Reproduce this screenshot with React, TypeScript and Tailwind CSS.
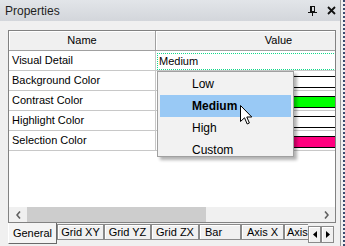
import type { ReactNode } from 'react'

const rows = [
  { name: 'Visual Detail', value: 'Medium' },
  { name: 'Background Color', color: '#ffffff' },
  { name: 'Contrast Color', color: '#00ff00' },
  { name: 'Highlight Color', color: '#ffffff' },
  { name: 'Selection Color', color: '#ff007f' },
]

const tabs = [
  { label: 'Grid XY', w: 'w-[47px]', pad: 'justify-center' },
  { label: 'Grid YZ', w: 'w-[47px]', pad: 'justify-center' },
  { label: 'Grid ZX', w: 'w-[48px]', pad: 'justify-center' },
  { label: 'Bar', w: 'w-[42px]', pad: 'pl-[5px]' },
  { label: 'Axis X', w: 'w-[43px]', pad: 'justify-center' },
  { label: 'Axis', w: 'w-[43px]', pad: 'pl-[2px]' },
]

function PinIcon() {
  return (
    <svg width="9" height="10" viewBox="0 0 9 10" className="block">
      <rect x="2.5" y="0.5" width="4" height="5" fill="none" stroke="#111" />
      <rect x="2" y="0" width="2" height="6" fill="#111" />
      <path d="M0 6.5h9M4.5 6v4" stroke="#111" strokeWidth="1" />
    </svg>
  )
}

function CloseIcon() {
  return (
    <svg width="9" height="9" viewBox="0 0 9 9" className="block">
      <path d="M1 1l7 7M8 1L1 8" stroke="#111" strokeWidth="1.8" />
    </svg>
  )
}

function Chevron({ dir }: { dir: 'l' | 'r' }) {
  return (
    <svg width="5" height="8" viewBox="0 0 5 8" className="block">
      <path
        d={dir === 'l' ? 'M4 0.5L1 4l3 3.5' : 'M1 0.5L4 4l-3 3.5'}
        fill="none"
        stroke="#606060"
        strokeWidth="1.6"
      />
    </svg>
  )
}

function Tri({ dir }: { dir: 'l' | 'r' }) {
  return (
    <svg width="4" height="7" viewBox="0 0 4 7" className="block">
      <path d={dir === 'l' ? 'M4 0v7L0 3.5z' : 'M0 0v7l4-3.5z'} fill="#000" />
    </svg>
  )
}

function HeaderCell({ w, children }: { w: string; children: ReactNode }) {
  return (
    <div
      className={`${w} flex h-[20px] shrink-0 items-center justify-center border-r border-b border-[#a0a0a0] bg-[#f0f0f0] shadow-[inset_1px_1px_0_#ffffff]`}
    >
      {children}
    </div>
  )
}

export default function App() {
  return (
    <div className="flex h-[246px] w-[345px] overflow-hidden bg-[#f0f0f0] font-['Liberation_Sans',Arial,sans-serif] text-[11px] text-black">
      <div className="relative flex h-full w-[341px] shrink-0 flex-col border-r border-[#9c9c9c]">
        {/* title */}
        <div className="flex h-[21px] shrink-0 items-center justify-between bg-gradient-to-b from-[#e2e5e9] to-[#d3d6db] pr-[4px] pl-[5px]">
          <span className="text-[12px] text-[#1e1e1e]">Properties</span>
          <div className="flex items-center gap-[10px]">
            <PinIcon />
            <CloseIcon />
          </div>
        </div>

        {/* grid */}
        <div className="mt-[9px] ml-[8px] flex h-[193px] w-[328px] flex-col border border-[#828282]">
          <div className="h-[176px] w-[326px] overflow-hidden bg-white">
            <div className="w-[393px]">
              <div className="flex">
                <HeaderCell w="w-[147px]">Name</HeaderCell>
                <HeaderCell w="w-[246px]">Value</HeaderCell>
              </div>
              {rows.map((r) => (
                <div key={r.name} className="flex h-[20px] border-b border-[#c8c8c8]">
                  <div className="flex w-[147px] shrink-0 items-center border-r border-[#c8c8c8] pl-[3px]">
                    {r.name}
                  </div>
                  <div className="w-[246px] shrink-0 pl-[1px]">
                    {r.value ? (
                      <div className="mt-[2px] flex h-[17px] items-center border-y border-l border-dotted border-[#14d88a] pl-[1px]">
                        {r.value}
                      </div>
                    ) : (
                      <div
                        className="mt-[5px] ml-[2px] h-[12px] w-[240px] border border-black"
                        style={{ backgroundColor: r.color }}
                      />
                    )}
                  </div>
                </div>
              ))}
            </div>
          </div>
          {/* horizontal scrollbar */}
          <div className="flex h-[15px] items-center bg-[#f0f0f0]">
            <div className="flex w-[18px] justify-center">
              <Chevron dir="l" />
            </div>
            <div className="h-[15px] w-[179px] bg-[#cdcdcd]" />
            <div className="flex-1" />
            <div className="flex w-[18px] justify-center">
              <Chevron dir="r" />
            </div>
          </div>
        </div>

        {/* tabs */}
        <div className="flex h-[24px] items-start pl-[8px]">
          <div className="flex h-[21px] w-[49px] shrink-0 items-end justify-center border-r border-b border-l border-r-[#696969] border-b-[#696969] border-l-white bg-[#f4f4f4] pb-[2px]">
            General
          </div>
          <div className="flex h-[24px] w-[251px] overflow-hidden">
            {tabs.map((t) => (
              <div
                key={t.label}
                className={`${t.w} ${t.pad} mt-[1px] flex h-[16px] shrink-0 items-center border border-[#8a8a8a] whitespace-nowrap shadow-[inset_1px_1px_0_#ffffff]`}
              >
                {t.label}
              </div>
            ))}
          </div>
          <div className="mt-[3px] flex h-[17px] w-[13px] shrink-0 items-center justify-center border border-[#8a8a8a] bg-[#f0f0f0] shadow-[inset_1px_1px_0_#ffffff]">
            <Tri dir="l" />
          </div>
          <div className="mt-[3px] flex h-[17px] w-[13px] shrink-0 items-center justify-center border border-[#8a8a8a] bg-[#f0f0f0] shadow-[inset_1px_1px_0_#ffffff]">
            <Tri dir="r" />
          </div>
        </div>

        {/* dropdown */}
        <div className="absolute top-[71px] left-[157px] h-[86px] w-[137px] overflow-hidden border border-[#a0a0a0] bg-[#f2f2f2] pt-[1px] text-[12px] shadow-[3px_3px_3px_rgba(0,0,0,0.3)]">
          {['Low', 'Medium', 'High', 'Custom'].map((o) => (
            <div
              key={o}
              className={`mx-[2px] flex h-[22px] items-center pl-[32px] ${
                o === 'Medium' ? 'bg-[#99c9f5] font-bold' : ''
              }`}
            >
              {o}
            </div>
          ))}
        </div>

        {/* mouse pointer */}
        <svg
          width="13"
          height="20"
          viewBox="0 0 13 20"
          className="absolute top-[105px] left-[240px]"
        >
          <path
            d="M0.5 0.5V16.5L4.5 12.8L7.2 19L9.4 18L6.8 12H11.8Z"
            fill="#fff"
            stroke="#000"
            strokeWidth="1"
            strokeLinejoin="round"
          />
        </svg>
      </div>
      <div className="ml-[2px] h-full w-0 border-r-2 border-dotted border-[#3b4a6e]" />
    </div>
  )
}
